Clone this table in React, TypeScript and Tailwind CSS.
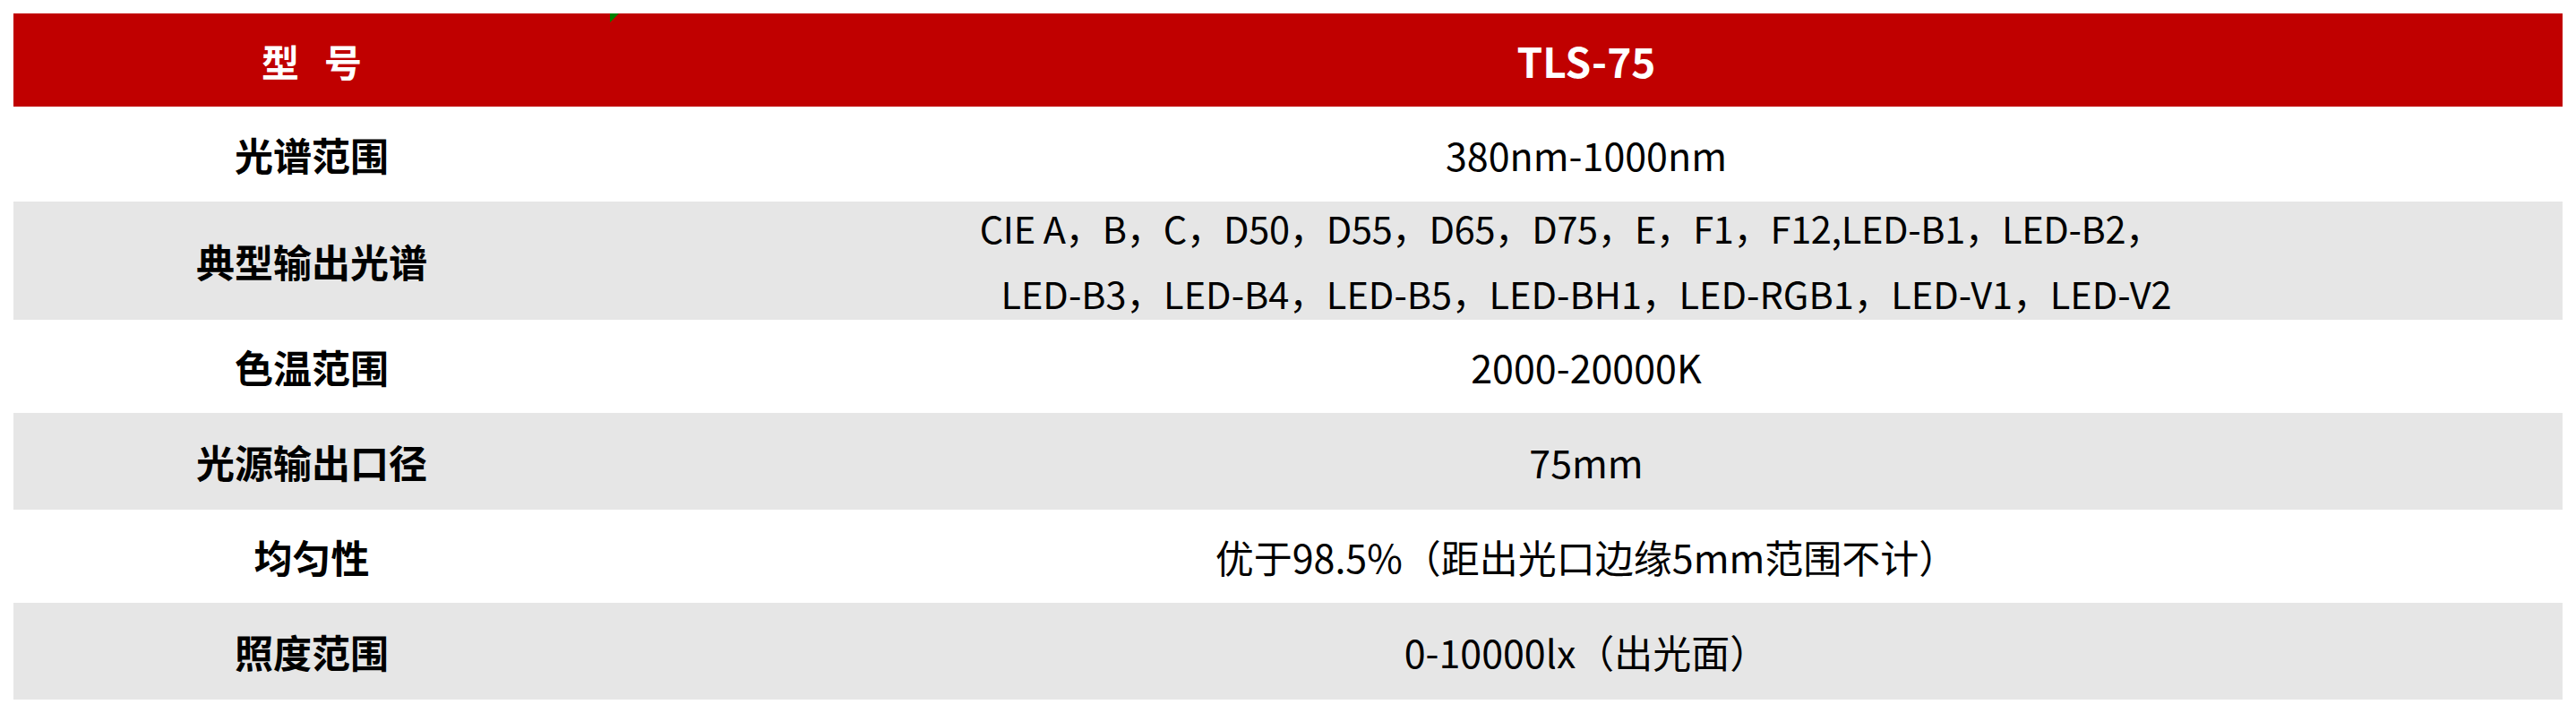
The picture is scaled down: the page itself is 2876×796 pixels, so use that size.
import React from "react";

const rows: { label: string; value: React.ReactNode; h: string; gray: boolean }[] = [
  { label: "光谱范围", value: "380nm-1000nm", h: "h-[106px]", gray: false },
  {
    label: "典型输出光谱",
    value: (
      <div className="leading-[73px] text-[41.5px]">
        <div className="pr-[34px] tracking-[-0.35px]">CIE A，B，C，D50，D55，D65，D75，E，F1，F12,LED-B1，LED-B2，</div>
        <div>LED-B3，LED-B4，LED-B5，LED-BH1，LED-RGB1，LED-V1，LED-V2</div>
      </div>
    ),
    h: "h-[132px]",
    gray: true,
  },
  { label: "色温范围", value: "2000-20000K", h: "h-[104px]", gray: false },
  { label: "光源输出口径", value: "75mm", h: "h-[108px]", gray: true },
  { label: "均匀性", value: "优于98.5%（距出光口边缘5mm范围不计）", h: "h-[104px]", gray: false },
  { label: "照度范围", value: "0-10000lx（出光面）", h: "h-[108px]", gray: true },
];

export default function App() {
  return (
    <div
      className="w-[2876px] h-[796px] bg-white pt-[15px] pl-[15px] text-black"
      style={{ fontFamily: '"Noto Sans CJK SC", "Noto Sans", sans-serif' }}
    >
      <div className="relative w-[2846px] flex flex-col">
        <div className="flex h-[104px] bg-[#C00000] text-white font-bold">
          <div className="w-[666px] flex items-center justify-center text-[42px] gap-[28px]">
            <span>型</span>
            <span>号</span>
          </div>
          <div className="flex-1 flex items-center justify-center text-[46px]">TLS-75</div>
        </div>
        <svg className="absolute left-[666px] top-0" width="10" height="10" viewBox="0 0 10 10">
          <polygon points="0,0 10,0 0,10" fill="#008000" />
        </svg>
        {rows.map((r) => (
          <div key={r.label} className={`flex ${r.h} ${r.gray ? "bg-[#E6E6E6]" : "bg-white"}`}>
            <div className="w-[666px] flex items-center justify-center text-[43px] font-bold">{r.label}</div>
            <div className="flex-1 flex items-center justify-center text-[43px] text-center">{r.value}</div>
          </div>
        ))}
      </div>
    </div>
  );
}
